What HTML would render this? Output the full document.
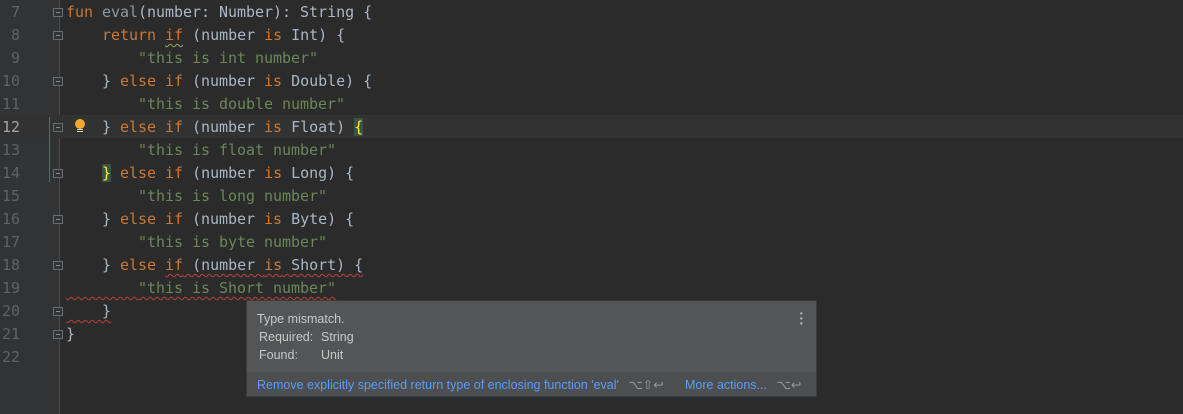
<!DOCTYPE html><html><head><style>
body{margin:0;width:1183px;height:414px;background:#2b2b2b;overflow:hidden;position:relative;font-family:"DejaVu Sans Mono","Liberation Mono",monospace;font-size:15px}
.g{position:absolute;left:0;top:0;width:59px;height:414px;background:#313335;border-right:1px solid #4a4c4e}
.cur{position:absolute;left:0;top:115px;width:1183px;height:23px;background:#323232}
.n{position:absolute;left:0;width:20px;text-align:right;color:#606366;height:23px;line-height:23px}
.l{position:absolute;left:66px;height:23px;line-height:23px;color:#a9b7c6;white-space:pre;letter-spacing:-0.03px}
.k{color:#cc7832}.s{color:#6a8759}
.f{position:absolute;left:53px;width:10px;height:9px;border:1px solid #6b6e70;background:#313335;box-sizing:border-box}
.f:after{content:"";position:absolute;left:2px;top:3px;width:4px;height:1px;background:#8a8d90}
.w{text-decoration:underline wavy #bc3f3c;text-decoration-thickness:1px;text-underline-offset:3px}
.pop{position:absolute;left:246px;top:300px;width:571px;height:97px;background:#535556;border:1px solid #3a3c3d;box-sizing:border-box;font-family:"Liberation Sans",sans-serif;font-size:12.5px;color:#c8c8c8}
.pop .b{position:absolute;left:0;right:0;bottom:0;height:24px;background:#4c4e50}
.pop a{color:#589df6}
</style></head><body>
<div class="g"></div>
<div class="cur"></div>
<div class="n" style="top:1px">7</div><div class="n" style="top:24px">8</div><div class="n" style="top:47px">9</div><div class="n" style="top:70px">10</div><div class="n" style="top:93px">11</div><div class="n" style="top:116px;color:#a4a3a3">12</div><div class="n" style="top:139px">13</div><div class="n" style="top:162px">14</div><div class="n" style="top:185px">15</div><div class="n" style="top:208px">16</div><div class="n" style="top:231px">17</div><div class="n" style="top:254px">18</div><div class="n" style="top:277px">19</div><div class="n" style="top:300px">20</div><div class="n" style="top:323px">21</div><div class="n" style="top:346px">22</div>
<div style="position:absolute;left:49px;top:117px;width:1px;height:65px;background:#5a6b63"></div>
<div class="f" style="top:8px"></div><div class="f" style="top:31px"></div><div class="f" style="top:77px"></div><div class="f" style="top:123px"></div><div class="f" style="top:169px"></div><div class="f" style="top:215px"></div><div class="f" style="top:261px"></div><div class="f" style="top:307px"></div><div class="f" style="top:330px"></div>
<div style="position:absolute;left:75px;top:119px;width:10px;height:10px;border-radius:50%;background:#f0a732"></div>
<div style="position:absolute;left:77px;top:129px;width:6px;height:1px;background:#ccc;box-shadow:0 2px 0 #ccc"></div>
<div class="l" style="top:1px"><span class="k">fun</span> <span style="color:#8f9aa3">eval</span>(number: Number): String {</div>
<div class="l" style="top:24px">    <span class="k">return</span> <span class="k" style="text-decoration:underline wavy #a8a05a;text-underline-offset:3px;text-decoration-thickness:1px">if</span> (number <span class="k">is</span> Int) {</div>
<div class="l" style="top:47px">        <span class="s">"this is int number"</span></div>
<div class="l" style="top:70px">    } <span class="k">else if</span> (number <span class="k">is</span> Double) {</div>
<div class="l" style="top:93px">        <span class="s">"this is double number"</span></div>
<div class="l" style="top:116px">    } <span class="k">else if</span> (number <span class="k">is</span> Float) <span style="background:#3b514d;color:#ffef28">{</span></div>
<div class="l" style="top:139px">        <span class="s">"this is float number"</span></div>
<div class="l" style="top:162px">    <span style="background:#3b514d;color:#ffef28">}</span> <span class="k">else if</span> (number <span class="k">is</span> Long) {</div>
<div class="l" style="top:185px">        <span class="s">"this is long number"</span></div>
<div class="l" style="top:208px">    } <span class="k">else if</span> (number <span class="k">is</span> Byte) {</div>
<div class="l" style="top:231px">        <span class="s">"this is byte number"</span></div>
<div class="l" style="top:254px">    } <span class="k">else</span> <span class="w"><span class="k">if</span> (number <span class="k">is</span> Short) {</span></div>
<div class="l" style="top:277px"><span class="w">        <span class="s">"this is Short number"</span></span></div>
<div class="l" style="top:300px"><span class="w">    }</span></div>
<div class="l" style="top:323px">}</div>
<div class="pop">
<div style="position:absolute;left:10px;top:11px">Type mismatch.</div>
<div style="position:absolute;left:12px;top:29px">Required:</div><div style="position:absolute;left:74px;top:29px">String</div>
<div style="position:absolute;left:12px;top:47px">Found:</div><div style="position:absolute;left:74px;top:47px">Unit</div>
<div style="position:absolute;right:12px;top:10px;color:#bbb;font-weight:bold;line-height:5px;font-size:14px">·<br>·<br>·</div>
<div class="b"><div style="position:absolute;left:10px;top:5px"><a>Remove explicitly specified return type of enclosing function 'eval'</a> <span style="color:#999;margin-left:6px">⌥⇧↩</span></div>
<div style="position:absolute;left:438px;top:5px"><a>More actions...</a> <span style="color:#999;margin-left:6px">⌥↩</span></div></div>
</div>
</body></html>
